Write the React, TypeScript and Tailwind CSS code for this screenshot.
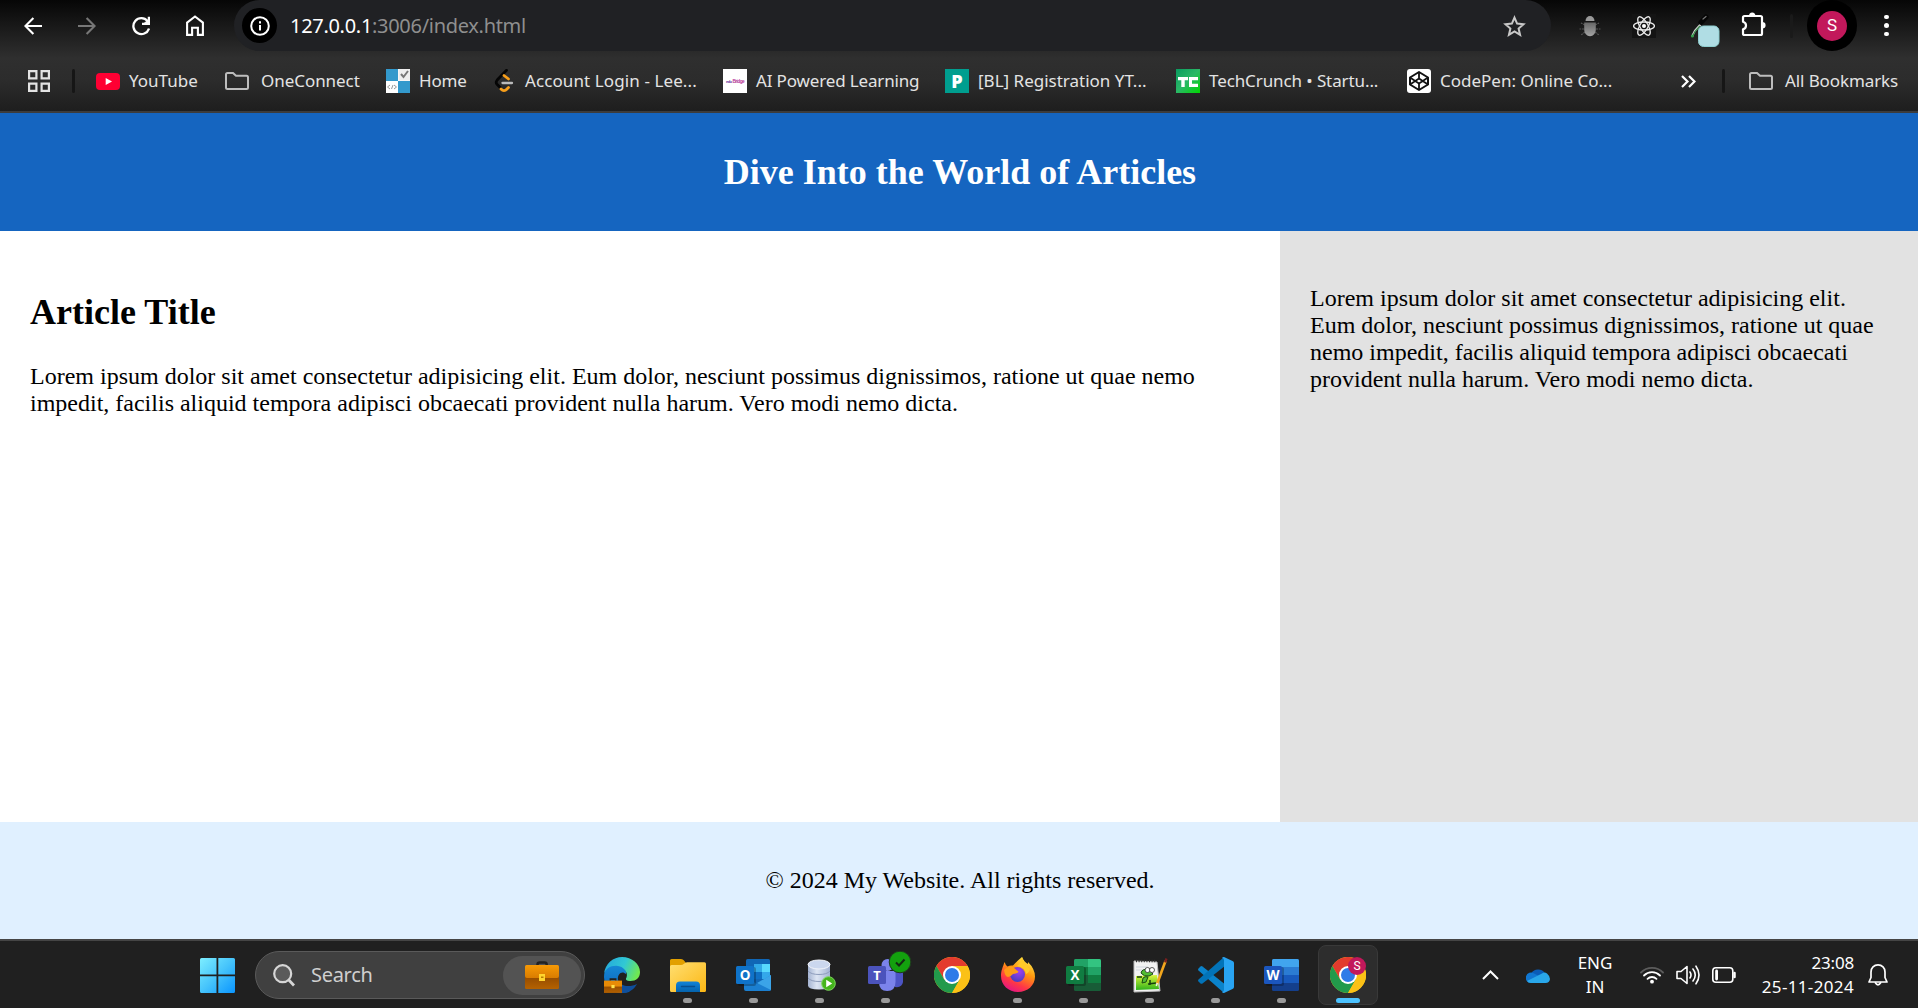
import React from "react";

type IconProps = { className?: string };

const UI = "font-['Noto_Sans','Open_Sans',sans-serif]";

/* ---------- browser toolbar icons ---------- */

const BackArrow = ({ className = "" }: IconProps) => (
  <svg viewBox="0 0 18 18" className={`h-[18px] w-[18px] ${className}`} fill="none" stroke="currentColor" strokeWidth="2.1">
    <path d="M18 9H1.6M9.4 .9 1.4 9l8 8.1" />
  </svg>
);

const Reload = () => (
  <svg viewBox="0 0 18 20" className="h-5 w-[18px]" fill="none" stroke="#fff" strokeWidth="2.3">
    <path d="M15.600 5A8 8 0 1 0 17 12.500" />
    <path d="M16.900 .8v7H10" />
    <path d="M16 4v3.500h-4z" fill="#fff" strokeWidth="1" />
  </svg>
);

const HomeIcon = () => (
  <svg viewBox="0 0 18 21" className="h-[21px] w-[18px]" fill="none" stroke="#fff" strokeWidth="2.1">
    <path d="M1.1 7.6 9 1.5l7.900 6.1v12.3h-5v-7.2H6.1v7.2h-5z" />
  </svg>
);

const InfoIcon = () => (
  <svg viewBox="0 0 20 20" className="h-5 w-5" fill="none" stroke="#fff" strokeWidth="2">
    <circle cx="10" cy="10" r="8.8" />
    <path d="M10 9v5.5M10 5.2v2.2" />
  </svg>
);

const StarIcon = () => (
  <svg viewBox="0 0 23 22" className="h-[22px] w-[23px]" fill="none" stroke="#c7c7c7" strokeWidth="2">
    <path d="m11.5 2.6 2.6 6 6.4.6-4.9 4.3 1.5 6.4-5.6-3.4-5.6 3.4 1.5-6.4-4.9-4.3 6.4-.6z" />
  </svg>
);

const BugIcon = () => (
  <svg viewBox="0 0 22 22" className="h-[22px] w-[22px]">
    <defs>
      <linearGradient id="bug" x1="0" y1="0" x2="0" y2="1">
        <stop offset="0" stopColor="#666" />
        <stop offset="1" stopColor="#a5a5a5" />
      </linearGradient>
    </defs>
    <g stroke="#555" strokeWidth="1.2" fill="none">
      <path d="M6 10 2 8M5 14H.5M6 17l-4 3M16 10l4-2M17 14h4.500M16 17l4 3" strokeDasharray="2 .8" />
    </g>
    <path d="M6.500 6a4.500 5 0 0 1 9 0z" fill="#999" />
    <path d="M5.200 7.500h11.600v6.800c0 4-2.600 7-5.800 7s-5.800-3-5.800-7z" fill="url(#bug)" />
  </svg>
);

const ReactIcon = () => (
  <svg viewBox="0 0 24 24" className="h-6 w-6 bg-[#141414]" fill="none" stroke="#eee" strokeWidth="1.3">
    <ellipse cx="12" cy="12" rx="10.400" ry="4" />
    <ellipse cx="12" cy="12" rx="10.400" ry="4" transform="rotate(60 12 12)" />
    <ellipse cx="12" cy="12" rx="10.400" ry="4" transform="rotate(120 12 12)" />
    <circle cx="12" cy="12" r="2" fill="#fff" stroke="none" />
  </svg>
);

const Dropper = () => (
  <svg viewBox="0 0 30 34" className="h-[34px] w-[30px]">
    <path d="m11.500 9.500-6.500 7-3 6" stroke="#d8d8d8" strokeWidth="2" fill="none" />
    <path d="m10 12-5 5.500-2.500 5" stroke="#3a8a4a" strokeWidth="1.300" fill="none" />
    <circle cx="2.400" cy="22" r="1.500" fill="#35a04c" />
    <path d="m11 8.500 5-5.500" stroke="#060606" strokeWidth="5" strokeLinecap="round" />
    <path d="m13 5 3-2.500" stroke="#777" strokeWidth="1.200" strokeLinecap="round" />
    <rect x="8.500" y="12" width="20.500" height="20.500" rx="5" fill="#b0dde4" stroke="#8fcfd0" />
  </svg>
);

const Puzzle = () => (
  <svg viewBox="0 0 25 25" className="h-[25px] w-[25px]">
    <path
      d="M2 5.500Q2 4 3.500 4H19.500Q21 4 21 5.500V21.500Q21 23 19.500 23H3.500Q2 23 2 21.500V17.300Q5 16.600 5 13.500T2 9.700z"
      fill="none"
      stroke="#fff"
      strokeWidth="2.200"
      strokeLinejoin="round"
    />
    <path d="M8 4a3.200 3.600 0 0 1 6.400 0zM21 10a3.600 3.200 0 0 1 0 6.400z" fill="#fff" />
  </svg>
);

/* ---------- bookmark icons ---------- */

const AppsGrid = () => (
  <svg viewBox="0 0 22 22" className="h-[22px] w-[22px]" fill="none" stroke="#e3e3e3" strokeWidth="2.200">
    <path d="M1.100 1.100h7.300v7.300H1.100zM13.600 1.100h7.300v7.300h-7.300zM1.100 13.600h7.300v7.300H1.100zM13.600 13.600h7.300v7.300h-7.300z" />
  </svg>
);

const Folder = () => (
  <svg viewBox="0 0 24 18" className="h-[18px] w-6" fill="none" stroke="#bdbdbd" strokeWidth="2">
    <path d="M1 2.500Q1 1 2.500 1H8l3 2.800h10.500Q23 3.800 23 5.300v10.200Q23 17 21.500 17h-19Q1 17 1 15.500z" />
  </svg>
);

const YouTube = () => (
  <svg viewBox="0 0 24 17" className="h-[17px] w-6">
    <rect width="24" height="17" rx="4" fill="#ff0033" />
    <path d="m9.700 5 6.300 3.500L9.700 12z" fill="#fff" />
  </svg>
);

const HomeFavicon = () => (
  <svg viewBox="0 0 24 24" className="h-6 w-6">
    <rect width="24" height="24" fill="#fff" />
    <rect width="12" height="12" fill="#3399cc" />
    <rect x="12" y="12" width="12" height="12" fill="#3399cc" />
    <rect x="12.500" width="11.500" height="11.500" fill="#eee" />
    <path d="m15 5 2.500 3L22 2" stroke="#777" strokeWidth="2" fill="none" />
    <path d="m4 16-2.500 2L4 20m3-4-1.500 4M8 16l2.500 2L8 20" stroke="#999" fill="none" />
  </svg>
);

const LeetCode = () => (
  <svg viewBox="0 0 22 24" className="h-6 w-[22px]" fill="none" strokeWidth="2.800" strokeLinecap="round">
    <path d="M12.500 1.300 3.200 11Q1.200 13.500 3.200 15.600l3 3" stroke="#050505" />
    <path d="m10 6.500 4.500 3.500M7 20q3 3.300 6 0l1.500-1.500" stroke="#f89f1b" />
    <path d="M8.500 14h9.500" stroke="#bbb" strokeWidth="2.300" />
  </svg>
);

const AiFavicon = () => (
  <svg viewBox="0 0 24 24" className="h-6 w-6">
    <rect width="24" height="24" fill="#fff" />
    <text x="3" y="13.500" fontSize="4.200" fontWeight="700" fontFamily="Liberation Sans, sans-serif" fill="#6a3b9c" textLength="6">
      edu
    </text>
    <text x="9.500" y="13.500" fontSize="4.800" fontWeight="700" fontFamily="Liberation Sans, sans-serif" fill="#b8359a" textLength="12">
      Bridge
    </text>
  </svg>
);

const PFavicon = () => (
  <svg viewBox="0 0 24 24" className="h-6 w-6">
    <rect width="24" height="24" fill="#009e8f" />
    <text x="12" y="18.500" fontSize="18" fontWeight="800" textAnchor="middle" fontFamily="Open Sans, sans-serif" fill="#fff">
      P
    </text>
  </svg>
);

const TechCrunch = () => (
  <svg viewBox="0 0 24 24" className="h-6 w-6">
    <defs>
      <linearGradient id="tc" x1="0" y1="0" x2="1" y2="1">
        <stop offset="0" stopColor="#0a9b60" />
        <stop offset=".5" stopColor="#2ab866" />
        <stop offset="1" stopColor="#00d800" />
      </linearGradient>
    </defs>
    <rect width="24" height="24" fill="url(#tc)" />
    <path d="M2 8h10v3.300H8.700V18H5.300v-6.700H2zM13 8h9v3.300h-6v3.400h6V18h-9z" fill="#fff" />
  </svg>
);

const CodePen = () => (
  <svg viewBox="0 0 24 24" className="h-6 w-6">
    <rect width="24" height="24" rx="3" fill="#fff" />
    <g fill="none" stroke="#111" strokeWidth="2" strokeLinejoin="round">
      <path d="m12 3 9 5.500v7L12 21l-9-5.500v-7z" />
      <path d="m3 8.500 9 6 9-6M3 15.500l9-6 9 6M12 3v6.500M12 14.500V21" strokeWidth="1.800" />
    </g>
  </svg>
);

/* ---------- taskbar icons ---------- */

const WindowsLogo = () => (
  <svg viewBox="0 0 35 35" className="h-[35px] w-[35px]">
    <defs>
      <linearGradient id="win" x1="0" y1="0" x2="35" y2="35" gradientUnits="userSpaceOnUse">
        <stop offset="0" stopColor="#7deeff" />
        <stop offset=".5" stopColor="#46c4fb" />
        <stop offset="1" stopColor="#0a95ff" />
      </linearGradient>
    </defs>
    <path d="M1.500 0H16.500V16.500H0V1.500Q0 0 1.500 0ZM18.300 0H33.500Q35 0 35 1.500V16.500H18.300ZM0 18.300H16.500V35H1.500Q0 35 0 33.500ZM18.300 18.300H35V33.500Q35 35 33.500 35H18.300Z" fill="url(#win)" />
  </svg>
);

const SearchIcon = () => (
  <svg viewBox="0 0 22 23" className="h-[23px] w-[22px]" fill="none" stroke="#d6d6d6">
    <circle cx="9.700" cy="9.700" r="8.500" strokeWidth="2.200" fill="#5a5a5a" />
    <path d="m15.800 16 5.200 5.500" strokeWidth="2.800" />
  </svg>
);

const Briefcase = ({ className = "" }: IconProps) => (
  <svg viewBox="0 0 34 28" className={className}>
    <defs>
      <linearGradient id="bc" x1="0" y1="0" x2="0" y2="1">
        <stop offset="0" stopColor="#b96500" />
        <stop offset=".35" stopColor="#8f4800" />
        <stop offset="1" stopColor="#b56200" />
      </linearGradient>
      <linearGradient id="bt" x1="0" y1="0" x2="0" y2="1">
        <stop offset="0" stopColor="#f79a05" />
        <stop offset="1" stopColor="#d97c00" />
      </linearGradient>
    </defs>
    <path d="M12.500 5V3.500Q12.500 1.400 14.600 1.400h5Q21.700 1.400 21.700 3.500V5" fill="none" stroke="#222" strokeWidth="2.500" />
    <rect y="6" width="34" height="22" rx="1.500" fill="url(#bc)" />
    <path d="M0 5.500Q0 4 1.500 4h31Q34 4 34 5.500V15q0 2-2 2H2q-2 0-2-2z" fill="url(#bt)" />
    <rect x="14" y="13" width="6" height="7" fill="#ffd52e" />
    <rect x="16" y="15.500" width="2.500" height="1.500" fill="#b77b00" />
  </svg>
);

const Edge = () => (
  <svg viewBox="0 0 36 36" className="h-9 w-9">
    <defs>
      <linearGradient id="eg" x1="0" y1=".2" x2="1" y2=".5">
        <stop offset="0" stopColor="#24a8dc" />
        <stop offset=".55" stopColor="#31c8d4" />
        <stop offset="1" stopColor="#70e850" />
      </linearGradient>
      <linearGradient id="eb" x1="0" y1="0" x2="0" y2="1">
        <stop offset="0" stopColor="#168ad8" />
        <stop offset="1" stopColor="#0b62b8" />
      </linearGradient>
    </defs>
    <path d="M0 20C0 12 5 7 12 7c7 0 11 5 10 10-4-4-9 0-8 6s9 8 15 6l-4 6q-4 1-7 1C8 36 0 29 0 20z" fill="url(#eb)" />
    <path d="M0 17C1 6.500 9.500 0 18 0c10 0 18 7 18 15 0 6-4 9-9.500 9-4 0-5.500-1.300-4-3.500C24.500 16 20 9 12.500 8.700 6 8.500 1.500 12 0 17z" fill="url(#eg)" />
    <path d="M14 23c2 6 11 8 19 4-3 6-9 9-15 9z" fill="#0f4f9c" />
    <svg x="0" y="21" width="18" height="15" viewBox="0 0 34 28">
      <path d="M12 5V2h10v3" fill="none" stroke="#222" strokeWidth="3" />
      <rect y="5" width="34" height="23" fill="url(#bc)" />
      <rect y="5" width="34" height="11" fill="#e88b06" />
      <rect x="14" y="13" width="6" height="6" fill="#ffe04a" />
    </svg>
  </svg>
);

const Explorer = () => (
  <svg viewBox="0 0 36 36" className="h-9 w-9">
    <defs>
      <linearGradient id="fx" x1="0" y1="0" x2="1" y2="1">
        <stop offset="0" stopColor="#ffdf72" />
        <stop offset="1" stopColor="#fcb714" />
      </linearGradient>
      <linearGradient id="fb" x1="0" y1="0" x2="0" y2="1">
        <stop offset="0" stopColor="#1283d8" />
        <stop offset="1" stopColor="#0463ad" />
      </linearGradient>
    </defs>
    <path d="M0 3.500Q0 2 1.500 2H11q2 0 3 1.500L16 6l-4 5H0z" fill="#e2a000" />
    <path d="M0 9.500q0-1.500 1.500-1.500H11q1.500 0 3-1.300T17 5.300h17.500Q36 5.300 36 6.800v26.700q0 1.500-1.500 1.500h-33Q0 35 0 33.500z" fill="url(#fx)" />
    <path d="M6 35v-6.500q0-4 4-4h16q4 0 4 4V35z" fill="url(#fb)" />
    <path d="M11.500 29.500h13" stroke="#084e8d" strokeWidth="1.500" strokeLinecap="round" />
  </svg>
);

type OfficeProps = { letter: string; back: React.ReactNode; fill: string };

const Office = ({ letter, back, fill }: OfficeProps) => (
  <svg viewBox="0 0 36 36" className="h-9 w-9">
    {back}
    <rect x="2" y="10" width="18" height="19" rx="2" fill="#000" opacity=".25" />
    <rect y="9" width="18" height="18" rx="1.500" fill={fill} />
    <text x="9" y="22.600" fontSize="13.500" fontWeight="700" textAnchor="middle" fontFamily="Open Sans, sans-serif" fill="#fff">
      {letter}
    </text>
  </svg>
);

const Outlook = () => (
  <Office
    letter="O"
    fill="#0f73c9"
    back={
      <>
        <rect x="10" y="2" width="24" height="25" rx="1.500" fill="#1066b5" />
        <rect x="18" y="7" width="8" height="8" fill="#32a9e7" />
        <rect x="26" y="7" width="8" height="8" fill="#58d9fd" />
        <rect x="18" y="15" width="8" height="7" fill="#0f70c4" />
        <rect x="26" y="15" width="8" height="7" fill="#34a8ea" />
        <path d="m8 19 13 8 14-9v14.500q0 1.500-1.500 1.500H10q-2 0-2-2z" fill="#1b7fd0" />
        <path d="m21 26 14-8v15z" fill="#3ba4e8" />
      </>
    }
  />
);

const Excel = () => (
  <Office
    letter="X"
    fill="#107c41"
    back={
      <>
        <rect x="8" y="2" width="27" height="32" rx="1.500" fill="#185c37" />
        <path d="M8 3.500Q8 2 9.500 2H22v8H8z" fill="#21a366" />
        <path d="M22 2h11.500Q35 2 35 3.500V10H22z" fill="#33c481" />
        <path d="M8 10h14v8H8zM22 18h13v8H22z" fill="#107c41" />
        <path d="M22 10h13v8H22z" fill="#21a366" />
      </>
    }
  />
);

const Word = () => (
  <Office
    letter="W"
    fill="#1b56bd"
    back={
      <>
        <rect x="8" y="2" width="27" height="32" rx="1.500" fill="#143f8c" />
        <path d="M8 3.500Q8 2 9.500 2h24Q35 2 35 3.500V10H8z" fill="#41a5ee" />
        <path d="M8 10h27v8H8z" fill="#2b7cd3" />
        <path d="M8 18h27v8H8z" fill="#185abd" />
      </>
    }
  />
);

const Database = () => (
  <svg viewBox="0 0 36 36" className="h-9 w-9">
    <defs>
      <linearGradient id="db" x1="0" y1="0" x2="1" y2="0">
        <stop offset="0" stopColor="#a5b4d2" />
        <stop offset=".4" stopColor="#dde5f3" />
        <stop offset="1" stopColor="#a3b3d3" />
      </linearGradient>
    </defs>
    <path d="M6 7h22v21.500q0 4-11 4t-11-4z" fill="url(#db)" />
    <ellipse cx="17" cy="7.500" rx="11" ry="4.500" fill="#cbd7ee" stroke="#f1f4fa" />
    <path d="M6 14q3 3.500 11 3.500t11-3.500M6 21q3 3.500 11 3.500t11-3.500" stroke="#8d9cbb" fill="none" />
    <circle cx="26.500" cy="26.500" r="6.800" fill="#45b51d" stroke="#7ed85d" />
    <path d="m24.200 22.800 6 3.700-6 3.700z" fill="#fff" />
  </svg>
);

const Teams = () => (
  <svg viewBox="0 0 44 42" className="-mr-2 -mt-1.5 h-[42px] w-11">
    <circle cx="30" cy="13" r="4" fill="#5059c9" />
    <circle cx="19.500" cy="14" r="6" fill="#7b83eb" />
    <path d="M26 21h9v10q-1 6-8 5z" fill="#4c54c4" />
    <path d="M11 20h16.500v11q0 9-8.300 9T11 31z" fill="#7b83eb" />
    <rect y="15" width="18" height="18" rx="1.500" fill="#4b53bc" />
    <text x="9" y="28.600" fontSize="13" fontWeight="700" textAnchor="middle" fontFamily="Open Sans, sans-serif" fill="#fff">
      T
    </text>
    <circle cx="32" cy="11" r="10.800" fill="#13a10e" stroke="#1f3a1e" />
    <path d="m28 11.500 3 3 5.500-6" fill="none" stroke="#142a14" strokeWidth="2" />
  </svg>
);

const ChromeLogo = () => (
  <svg viewBox="0 0 36 36" className="h-9 w-9">
    <circle cx="18" cy="18" r="18" fill="#fbc116" />
    <path d="M18 9h15.600A18 18 0 0 0 2.400 9l7.800 13.500z" fill="#e33b2e" />
    <path d="M2.400 9A18 18 0 0 0 18 36l7.800-13.500H10.200z" fill="#229a4b" />
    <path d="M18 36A18 18 0 0 0 33.600 9H18l7.800 13.500z" fill="#fbc116" />
    <circle cx="18" cy="18" r="9" fill="#fff" />
    <circle cx="18" cy="18" r="7" fill="#2f7be8" />
  </svg>
);

const Firefox = () => (
  <svg viewBox="0 0 36 36" className="h-9 w-9">
    <defs>
      <linearGradient id="ff" x1=".8" y1="0" x2=".3" y2="1">
        <stop offset="0" stopColor="#fff44f" />
        <stop offset=".4" stopColor="#ff980e" />
        <stop offset=".75" stopColor="#ff3647" />
        <stop offset="1" stopColor="#e31587" />
      </linearGradient>
      <radialGradient id="fp" cx=".6" cy=".3" r=".7">
        <stop offset="0" stopColor="#a43df0" />
        <stop offset="1" stopColor="#4b3dc0" />
      </radialGradient>
    </defs>
    <path d="M4.500 5q1 3 3 4.500Q10 8 13 8.500 16 5 22 0q2 5 6 7V5q7 7 7 14.500C35 28.500 27.500 35 18 35S1 28 1 19C1 13 3 10 4.500 5z" fill="url(#ff)" />
    <circle cx="17.500" cy="17.500" r="7.500" fill="url(#fp)" />
    <path d="M4 13q5-5 9-3l4 3.500q2 .5 1 2-2 1-5 1.500-2 2.500-5 3-3 0-4-7z" fill="#ff9b16" />
    <path d="M17 9q5-4 5-9 3 8 8 12-1 4-4 5-1-7-9-8z" fill="#ffc928" />
  </svg>
);

const NotepadPP = () => (
  <svg viewBox="0 0 36 36" className="h-9 w-9">
    <defs>
      <linearGradient id="np" x1="0" y1="0" x2="0" y2="1">
        <stop offset="0" stopColor="#d9f53a" />
        <stop offset="1" stopColor="#2fb31b" />
      </linearGradient>
    </defs>
    <path d="m2 4 23 1 3 29-26 1z" fill="#f2f2f2" stroke="#bbb" />
    <path d="M4 4h20" stroke="#333" strokeWidth="2.500" strokeDasharray="1 1.600" />
    <path d="m4 19 21-1 2 14-23 1z" fill="url(#np)" />
    <path d="M4 10h12M4 13h10" stroke="#cfd6df" />
    <path d="M9 16q1-5 8-3l4 4-4 2q-5 1-8-3zm2 5q2-2 5-1l-2 5-4 1z" fill="#52bd32" stroke="#1c4d14" />
    <path d="M5 20h5m6 7 8-1m-6-3v5" stroke="#163d10" strokeWidth="1.500" />
    <circle cx="15.500" cy="13" r="2.500" fill="#fff" stroke="#333" strokeWidth=".8" />
    <circle cx="20" cy="13" r="2.500" fill="#fff" stroke="#333" strokeWidth=".8" />
    <path d="M33.500 4 25 27" stroke="#f3a61d" strokeWidth="2.600" />
    <path d="m34.500 1.500-1.400 3.800" stroke="#7a1f1f" strokeWidth="2.300" />
    <path d="m25.300 26-1 3" stroke="#eee" strokeWidth="1.500" />
  </svg>
);

const VSCode = () => (
  <svg viewBox="0 0 36 36" className="h-9 w-9">
    <path d="M.5 13.400q-.9-1 0-2l2-2q1-.7 2 0L26 26.500V36z" fill="#0a83cb" />
    <path d="M26 0 .5 22.600q-.9 1 0 2l2 1.900q1 .7 2 0L26 9.800z" fill="#0273b8" />
    <path d="m26 0 8.500 4Q36 4.700 36 6v24q0 1.300-1.500 2L26 36q-1.500 0-2-1 2-.5 2-2V3q0-1.500-2-2 .5-1 2-1z" fill="#29a4f2" />
  </svg>
);

const ChromeProfile = () => (
  <div className="relative">
    <ChromeLogo />
    <span className="absolute left-[18px] top-0 grid h-[18px] w-[18px] place-items-center rounded-full bg-[#c2185b] font-['Roboto',sans-serif] text-[12px] leading-none text-white">
      S
    </span>
  </div>
);

const OneDrive = () => (
  <svg viewBox="0 0 24 16" className="h-4 w-6">
    <path d="M5.500 6A7.500 6.500 0 0 1 18.500 5.500L12 11z" fill="#0a5cb8" />
    <path d="M5 16a5.200 5.200 0 1 1 3-9.400l8 3.900L12 16z" fill="#1077d2" />
    <path d="M16 6.500q2.500-2 5 0t3 5.500q-.5 4-4.500 4H5q-3 0-4-2z" fill="#29a7ea" />
  </svg>
);

const Wifi = () => (
  <svg viewBox="0 0 24 18" className="h-[18px] w-6" fill="none" stroke="#fff" strokeWidth="1.800" strokeLinecap="round">
    <path d="M1 6.500a15.500 15.500 0 0 1 22 0" stroke="#5c5c5c" />
    <path d="M4 9.500a11.300 11.300 0 0 1 16 0M7.500 12.800a6.500 6.500 0 0 1 9 0" />
    <circle cx="12" cy="15.700" r="1.900" fill="#fff" stroke="none" />
  </svg>
);

const Volume = () => (
  <svg viewBox="0 0 24 20" className="h-5 w-6" fill="none" stroke="#fff" strokeWidth="1.600" strokeLinecap="round" strokeLinejoin="round">
    <path d="M1 6.500h4L11 1.500v17l-6-5H1z" />
    <path d="M14 7q2 3 0 6M17 4q4.500 6 0 12M20 1.200q6 8.800 0 17.600" />
  </svg>
);

const Battery = () => (
  <svg viewBox="0 0 24 16" className="h-4 w-6" fill="none" stroke="#fff" strokeWidth="1.600">
    <rect x=".8" y=".8" width="20" height="14.400" rx="3" />
    <path d="M4.600 4v8" strokeWidth="2.800" strokeLinecap="round" />
    <path d="M22.500 6v4" strokeWidth="2.500" strokeLinecap="round" />
  </svg>
);

const Bell = () => (
  <svg viewBox="0 0 20 22" className="h-[22px] w-5" fill="none" stroke="#fff" strokeWidth="1.700" strokeLinejoin="round">
    <path d="M10 .9c-4 0-7 3-7 7v5.600L1 18h18l-2-4.500V7.900c0-4-3-7-7-7z" />
    <path d="M7 18.300q3 5 6 0" />
  </svg>
);

/* ---------- data ---------- */

type Bookmark = { label: string; icon: React.ReactNode; slot: string; gap: string; track: string };

const bookmarks: Bookmark[] = [
  { label: "YouTube", icon: <YouTube />, slot: "w-[129px]", gap: "gap-[9px]", track: "tracking-[0px]" },
  { label: "OneConnect", icon: <Folder />, slot: "w-[161px]", gap: "gap-3", track: "tracking-[-0.05px]" },
  { label: "Home", icon: <HomeFavicon />, slot: "w-[108px]", gap: "gap-[9px]", track: "tracking-[-0.2px]" },
  { label: "Account Login - Lee...", icon: <LeetCode />, slot: "w-[229px]", gap: "gap-[9px]", track: "tracking-[0.1px]" },
  { label: "AI Powered Learning", icon: <AiFavicon />, slot: "w-[222px]", gap: "gap-[9px]", track: "tracking-[-0.15px]" },
  { label: "[BL] Registration YT...", icon: <PFavicon />, slot: "w-[231px]", gap: "gap-[9px]", track: "tracking-[0px]" },
  { label: "TechCrunch • Startu...", icon: <TechCrunch />, slot: "w-[231px]", gap: "gap-[9px]", track: "tracking-[-0.1px]" },
  { label: "CodePen: Online Co...", icon: <CodePen />, slot: "w-[274px]", gap: "gap-[9px]", track: "tracking-[0px]" },
];

type TaskApp = { name: string; icon: React.ReactNode; state: "idle" | "open" | "active" };

const apps: TaskApp[] = [
  { name: "Edge", icon: <Edge />, state: "idle" },
  { name: "Explorer", icon: <Explorer />, state: "open" },
  { name: "Outlook", icon: <Outlook />, state: "open" },
  { name: "Database", icon: <Database />, state: "open" },
  { name: "Teams", icon: <Teams />, state: "open" },
  { name: "Chrome", icon: <ChromeLogo />, state: "idle" },
  { name: "Firefox", icon: <Firefox />, state: "open" },
  { name: "Excel", icon: <Excel />, state: "open" },
  { name: "Notepad++", icon: <NotepadPP />, state: "open" },
  { name: "VS Code", icon: <VSCode />, state: "open" },
  { name: "Word", icon: <Word />, state: "open" },
  { name: "Chrome profile", icon: <ChromeProfile />, state: "active" },
];

const LOREM =
  "Lorem ipsum dolor sit amet consectetur adipisicing elit. Eum dolor, nesciunt possimus dignissimos, ratione ut quae nemo impedit, facilis aliquid tempora adipisci obcaecati provident nulla harum. Vero modi nemo dicta.";

/* ---------- sections ---------- */

const Toolbar = () => (
  <div className="flex h-[51px] items-center">
    <BackArrow className="ml-6 text-white" />
    <BackArrow className="ml-9 rotate-180 text-[#777]" />
    <div className="ml-9">
      <Reload />
    </div>
    <div className="ml-9">
      <HomeIcon />
    </div>
    <div className="ml-[30px] flex h-[51px] w-[1317px] items-center rounded-[26px] bg-[#202124] pl-2 pr-[25px]">
      <span className="grid h-[35px] w-[35px] place-items-center rounded-full bg-black">
        <InfoIcon />
      </span>
      <span className="ml-[13px] whitespace-nowrap text-[20px] leading-none tracking-[-0.3px] text-[#8f8f8f]">
        <span className="text-white">127.0.0.1</span>:3006/index.html
      </span>
      <span className="ml-auto">
        <StarIcon />
      </span>
    </div>
    <div className="ml-7">
      <BugIcon />
    </div>
    <div className="ml-[31px]">
      <ReactIcon />
    </div>
    <div className="ml-[34px] pt-2.5">
      <Dropper />
    </div>
    <div className="ml-[21px] pb-[3px]">
      <Puzzle />
    </div>
    <span className="ml-6 h-6 w-[3px] rounded bg-[#1a1a1a]" />
    <span className="ml-3.5 grid h-[51px] w-[50px] place-items-center rounded-full bg-black">
      <span className="grid h-[30px] w-[30px] place-items-center rounded-full bg-[#c2185b] font-['Roboto',sans-serif] text-[17px] leading-none text-white">
        S
      </span>
    </span>
    <span className="ml-[27px] flex flex-col gap-[4px]">
      <i className="h-[4.500px] w-[4.500px] rounded-full bg-white" />
      <i className="h-[4.500px] w-[4.500px] rounded-full bg-white" />
      <i className="h-[4.500px] w-[4.500px] rounded-full bg-white" />
    </span>
  </div>
);

const Bookmarks = () => (
  <div className="flex h-[60px] items-center text-[17px] leading-none text-[#e3e3e3]">
    <div className="ml-7">
      <AppsGrid />
    </div>
    <span className="ml-[22px] mr-[21px] h-6 w-[3px] rounded bg-[#161616]" />
    {bookmarks.map((b) => (
      <div key={b.label} className={`flex shrink-0 items-center whitespace-nowrap ${b.slot} ${b.gap} ${b.track}`}>
        {b.icon}
        <span className="pb-0.5">{b.label}</span>
      </div>
    ))}
    <svg viewBox="0 0 15 13" className="h-[13px] w-[15px]" fill="none" stroke="#fff" strokeWidth="2.200">
      <path d="m1 1 5.500 5.500L1 12M8 1l5.500 5.500L8 12" />
    </svg>
    <span className="ml-[26px] h-6 w-[3px] rounded bg-[#161616]" />
    <div className="ml-6 flex items-center gap-3 whitespace-nowrap tracking-[-0.1px]">
      <Folder />
      <span className="pb-0.5">All Bookmarks</span>
    </div>
  </div>
);

const Taskbar = () => (
  <div className={`flex h-[69px] shrink-0 items-center border-t-2 border-[#454545] bg-[#202020] text-white ${UI}`}>
    <div className="ml-[200px] pt-0.5">
      <WindowsLogo />
    </div>
    <div className="ml-5 mt-px flex h-12 w-[330px] items-center rounded-full border border-[#5a5a5a] bg-[#404040] pl-[17px] pr-[3px]">
      <SearchIcon />
      <span className="ml-4 text-[20px] leading-none tracking-[-0.3px] text-[#cfcfcf]">Search</span>
      <span className="ml-auto grid h-[39px] w-[78px] place-items-center rounded-full bg-[#535353]">
        <Briefcase className="h-7 w-[34px]" />
      </span>
    </div>
    <div className="ml-1 flex">
      {apps.map((a) => (
        <div key={a.name} className="grid h-[67px] w-[66px] place-items-center">
          <div
            className={`relative grid h-[60px] w-[60px] place-items-center rounded-lg ${
              a.state === "active" ? "border border-[#393939] bg-[#2d2d2d]" : ""
            }`}
          >
            {a.icon}
            {a.state === "open" && <i className="absolute bottom-0.5 left-[25px] h-[5px] w-[9px] rounded-full bg-[#9a9a9a]" />}
            {a.state === "active" && <i className="absolute bottom-px left-[17px] h-[5px] w-6 rounded-full bg-[#4cc2ff]" />}
          </div>
        </div>
      ))}
    </div>
    <svg viewBox="0 0 17 10" className="ml-[101px] h-[10px] w-[17px]" fill="none" stroke="#fff" strokeWidth="2">
      <path d="m1 9 7.500-7.500L16 9" />
    </svg>
    <div className="ml-[27px]">
      <OneDrive />
    </div>
    <div className="ml-[27px] w-[36px] text-center text-[17px] leading-6 tracking-[-0.1px]">
      ENG
      <br />
      IN
    </div>
    <div className="ml-[27px] flex items-center gap-3">
      <Wifi />
      <Volume />
      <Battery />
    </div>
    <div className="ml-auto text-right text-[17px] leading-6">
      <div className="tracking-[-0.2px]">23:08</div>
      <div className="tracking-[0.35px]">25-11-2024</div>
    </div>
    <div className="ml-[14px] mr-[30px]">
      <Bell />
    </div>
  </div>
);

export default function App() {
  return (
    <div className="flex h-[1008px] w-[1918px] flex-col overflow-hidden bg-white font-['Liberation_Serif',serif] text-[24px] leading-[27px] text-black">
      <div
        className={`h-[113px] shrink-0 border-b-2 border-[#3c3c3c] bg-[linear-gradient(180deg,#060606_0px,#181818_25px,#2f2f2f_58px,#2c2c2c_80px,#1e1e1e_111px)] ${UI}`}
      >
        <Toolbar />
        <Bookmarks />
      </div>
      <header className="grid h-[118px] shrink-0 place-items-center bg-[#1565c0] pl-0.5">
        <h2 className="text-[36px] font-bold leading-[41px] text-white">Dive Into the World of Articles</h2>
      </header>
      <main className="flex min-h-0 flex-1">
        <article className="w-[1280px] p-[30px]">
          <h2 className="mb-[30px] mt-[31px] text-[36px] font-bold leading-[41px]">Article Title</h2>
          <p>{LOREM}</p>
        </article>
        <aside className="flex-1 bg-[#e2e2e2] p-[30px]">
          <p className="mt-6">{LOREM}</p>
        </aside>
      </main>
      <footer className="grid h-[117px] shrink-0 place-items-center bg-[#e0f0ff] pl-0.5">
        <p>© 2024 My Website. All rights reserved.</p>
      </footer>
      <Taskbar />
    </div>
  );
}
